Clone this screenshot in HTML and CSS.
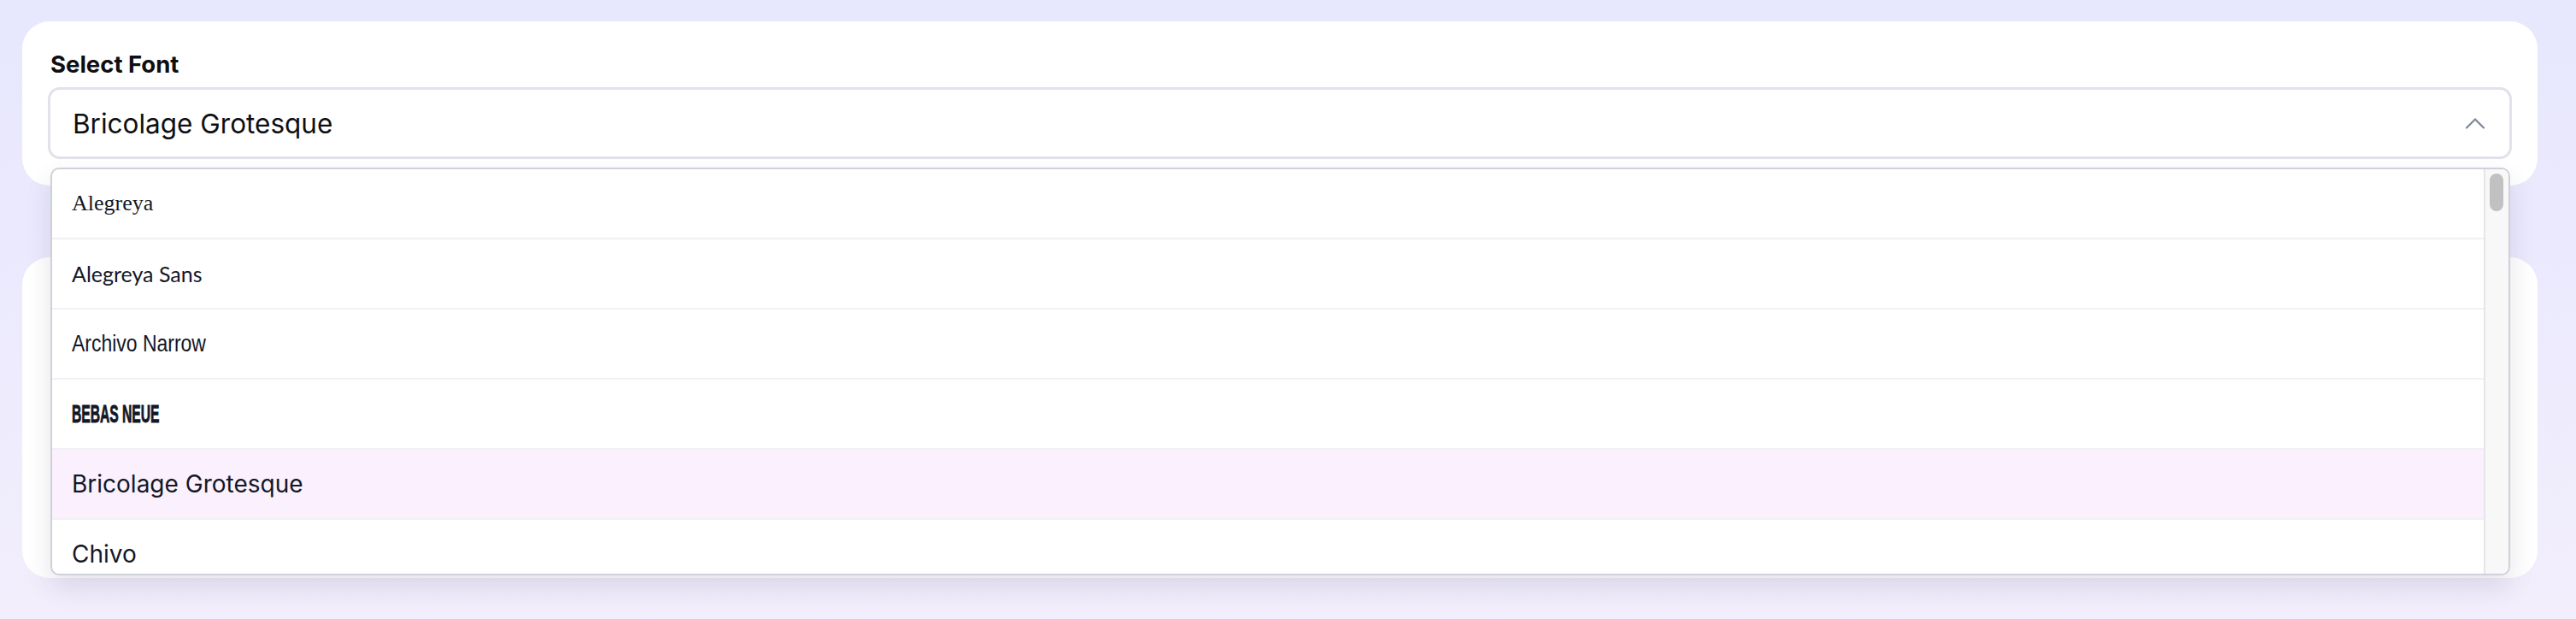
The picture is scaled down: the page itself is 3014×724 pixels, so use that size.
FILE: index.html
```html
<!DOCTYPE html>
<html lang="en">
<head>
<meta charset="utf-8">
<title>Select Font</title>
<link rel="stylesheet" href="styles.css">
</head>
<body>
<main class="page">
  <section class="card card-select">
    <label class="field-label">Select Font</label>
    <div class="select-wrap">
      <div class="select-box">
        <span class="select-value">Bricolage Grotesque</span>
        <svg class="chevron" width="24" height="14" viewBox="0 0 24 14" aria-hidden="true">
          <polyline points="2,12.5 12,2.5 22,12.5" fill="none" stroke="currentColor" stroke-width="2.2" stroke-linecap="round" stroke-linejoin="round"/>
        </svg>
      </div>
      <div class="dropdown">
        <ul class="options">
          <li class="option f-alegreya">Alegreya</li>
          <li class="option f-alegreya-sans">Alegreya Sans</li>
          <li class="option"><span class="narrow">Archivo Narrow</span></li>
          <li class="option"><span class="bebas">Bebas Neue</span></li>
          <li class="option f-bricolage is-selected">Bricolage Grotesque</li>
          <li class="option f-chivo">Chivo</li>
        </ul>
        <div class="scrollbar"><div class="thumb"></div></div>
      </div>
    </div>
  </section>
  <section class="card card-preview"></section>
</main>
</body>
</html>
```

FILE: styles.css
```css
* { box-sizing: border-box; }

html, body {
  margin: 0;
  padding: 0;
}

body {
  width: 3014px;
  height: 724px;
  overflow: hidden;
  background: linear-gradient(180deg, #e7e7fd 0%, #eceafd 50%, #f2eefc 100%);
  font-family: Inter, "Noto Sans", sans-serif;
  color: #141826;
}

.page {
  padding: 25px 45px 0 26px;
}

.card {
  background: #ffffff;
  border-radius: 32px;
  width: 2943px;
}

.card-select {
  position: relative;
  z-index: 2;
  padding: 31px 30px 31px 30px;
}

.field-label {
  display: block;
  font-size: 27.5px;
  font-weight: 700;
  line-height: 38px;
  color: #0f0f12;
  margin: 0 0 8px 3px;
}

.select-wrap {
  position: relative;
}

.select-box {
  height: 84px;
  border: 3px solid #e1e2ea;
  border-radius: 14px;
  display: flex;
  align-items: center;
  justify-content: space-between;
  padding: 0 28px 0 26px;
  background: #ffffff;
}

.select-value {
  font-size: 31.5px;
  color: #0f0f12;
}

.chevron {
  color: #7f8798;
  display: block;
}

.dropdown {
  position: absolute;
  top: calc(100% + 10px);
  left: 3px;
  right: 2px;
  height: 477px;
  background: #ffffff;
  border: 2px solid #ced1d7;
  border-radius: 10px;
  overflow: hidden;
  display: flex;
  box-shadow: 0 14px 30px rgba(40, 40, 80, 0.12);
}

.options {
  list-style: none;
  margin: 0;
  padding: 0;
  flex: 1;
}

.option {
  height: 82px;
  display: flex;
  align-items: center;
  padding-left: 23px;
  border-bottom: 2px solid #f0f0f5;
  color: #141826;
  font-size: 28px;
}

.option.is-selected {
  background: #fbf0fd;
}

.f-alegreya {
  font-family: "Liberation Serif", "DejaVu Serif", serif;
  font-size: 26px;
}

.f-alegreya-sans {
  font-family: Lato, "Open Sans", sans-serif;
  font-size: 25px;
}

.narrow {
  display: inline-block;
  font-family: "Liberation Sans", Arial, sans-serif;
  font-size: 28px;
  transform: scaleX(0.82);
  transform-origin: left center;
}

.bebas {
  display: inline-block;
  font-family: "Liberation Sans", Arial, sans-serif;
  font-weight: 700;
  font-size: 29.5px;
  line-height: 1;
  text-transform: uppercase;
  -webkit-text-stroke: 0.9px #141826;
  transform: scaleX(0.53);
  transform-origin: left center;
}

.f-bricolage,
.f-chivo {
  font-family: Inter, "Noto Sans", sans-serif;
  font-size: 28px;
}

.scrollbar {
  width: 29px;
  background: #f8f8f8;
  border-left: 2px solid #e6e6e6;
  padding: 5px 0 0 5px;
}

.thumb {
  width: 16px;
  height: 44px;
  border-radius: 8px;
  background: #c1c1c1;
}

.card-preview {
  margin-top: 84px;
  height: 375px;
  position: relative;
  z-index: 1;
}
```
